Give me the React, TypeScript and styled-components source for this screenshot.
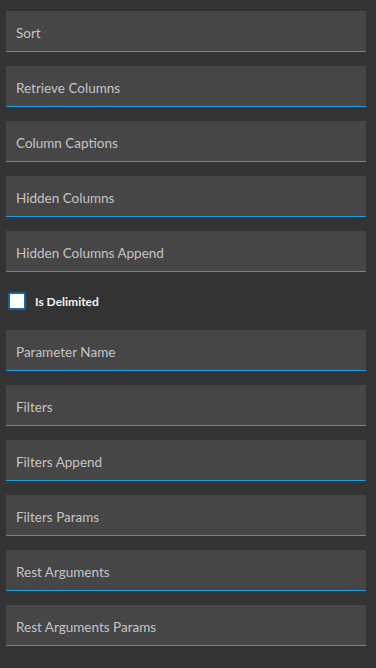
import React from "react";
import styled, { createGlobalStyle } from "styled-components";

const GlobalStyle = createGlobalStyle`
    html, body {
        margin: 0;
        padding: 0;
        background-color: #333333;
    }
`;

const Page = styled.div`
    width: 376px;
    min-height: 668px;
    box-sizing: border-box;
    padding: 11px 10px 0 6px;
    display: flex;
    flex-direction: column;
    gap: 14px;
    font-family: Lato, "Open Sans", sans-serif;
`;

const Field = styled.div`
    height: 41px;
    background-color: #464646;
    border-bottom: 1px solid #1f9fe4;
    box-sizing: border-box;
    padding: 3px 10px 0;
    display: flex;
    align-items: center;
    font-size: 13.5px;
    color: #c4c4c4;
`;

const CheckRow = styled.label`
    display: flex;
    align-items: center;
    gap: 9px;
    height: 30px;
    margin-left: 2px;
    font-size: 12px;
    font-weight: 700;
    color: #f2f2f2;
`;

const Box = styled.span`
    width: 18px;
    height: 18px;
    box-sizing: border-box;
    border: 2px solid #1b6599;
    border-radius: 2px;
    background-color: #ffffff;
`;

const fieldsTop = ["Sort", "Retrieve Columns", "Column Captions", "Hidden Columns", "Hidden Columns Append"];
const fieldsBottom = [
    "Parameter Name",
    "Filters",
    "Filters Append",
    "Filters Params",
    "Rest Arguments",
    "Rest Arguments Params",
];

const App = () => {
    return (
        <>
            <GlobalStyle />
            <Page>
                {fieldsTop.map((f) => (
                    <Field key={f}>{f}</Field>
                ))}
                <CheckRow>
                    <Box />
                    Is Delimited
                </CheckRow>
                {fieldsBottom.map((f) => (
                    <Field key={f}>{f}</Field>
                ))}
            </Page>
        </>
    );
};

export default App;
